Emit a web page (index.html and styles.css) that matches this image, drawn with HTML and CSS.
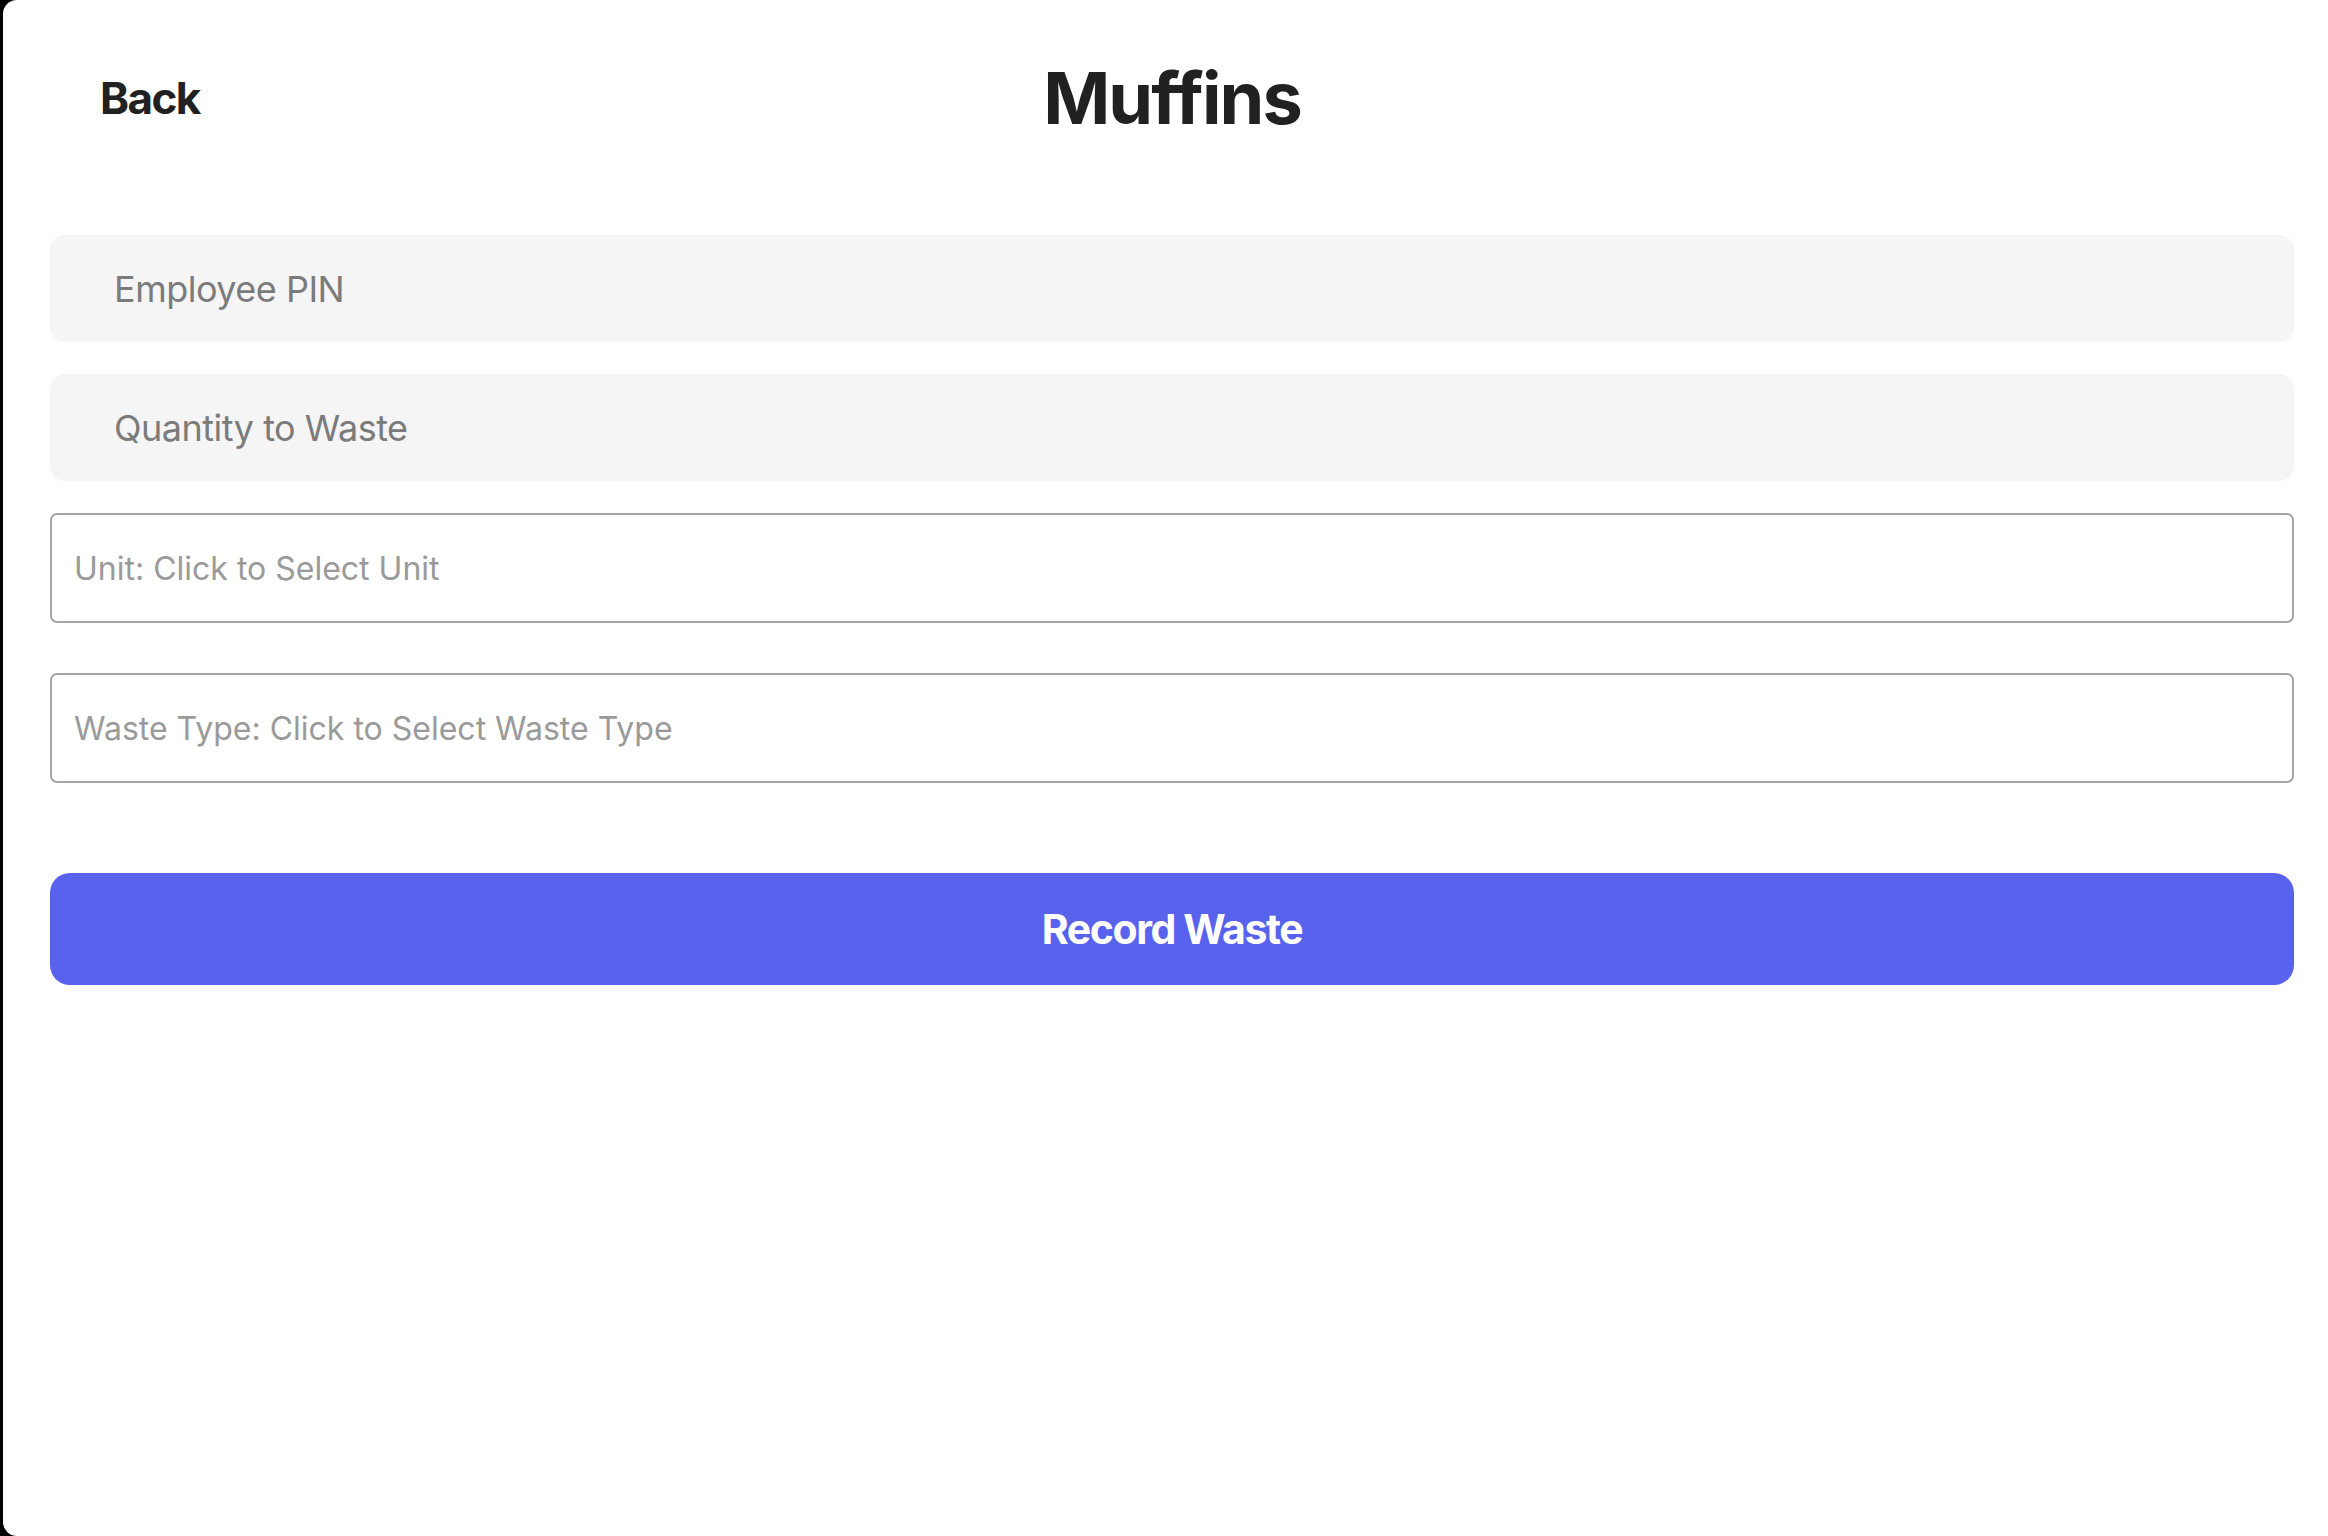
FILE: index.html
```html
<!DOCTYPE html>
<html lang="en">
<head>
    <meta charset="UTF-8">
    <meta name="viewport" content="width=device-width, initial-scale=1.0">
    <title>Record Waste - Muffins</title>
    <link rel="stylesheet" href="styles.css">
</head>
<body>
    <div class="screen">
        <div class="header">
            <a class="back" href="#">Back</a>
            <h1 class="title">Muffins</h1>
            <div></div>
        </div>

        <!-- Waste form -->
        <form class="waste-form" onsubmit="return false;">
            <input class="field field-pin" type="password" placeholder="Employee PIN">
            <input class="field field-qty" type="text" placeholder="Quantity to Waste">
            <div class="select select-unit">Unit: Click to Select Unit</div>
            <div class="select select-type">Waste Type: Click to Select Waste Type</div>
            <button class="record-button" type="submit">Record Waste</button>
        </form>
    </div>
</body>
</html>
```

FILE: styles.css
```css
body {
    margin: 0;
    background-color: #000;
    font-family: 'Inter', 'Liberation Sans', sans-serif;
    color: #212121;
}
.screen {
    margin-left: 3px;
    min-height: 100vh;
    box-sizing: border-box;
    background-color: #fff;
    border-radius: 14px 0 0 14px;
    padding: 55px 34px 0 47px;
}
.header {
    display: grid;
    grid-template-columns: 1fr auto 1fr;
    align-items: center;
    height: 86px;
}
.back {
    padding-left: 50px;
    font-size: 44px;
    font-weight: 700;
    color: #212121;
    text-decoration: none;
    letter-spacing: -1.6px;
}
.title {
    margin: 0;
    font-size: 72px;
    line-height: 86px;
    font-weight: 700;
    letter-spacing: -2px;
}
.waste-form {
    display: flex;
    flex-direction: column;
    margin-top: 94px;
}
.field {
    height: 107px;
    box-sizing: border-box;
    border: none;
    border-radius: 15px;
    background-color: #f5f5f5;
    padding: 0 64px;
    font-family: inherit;
    font-size: 36px;
    letter-spacing: -0.5px;
    color: #333;
    margin-bottom: 32px;
    outline: none;
}
.field::placeholder {
    color: #7b7b7b;
}
.select {
    height: 110px;
    box-sizing: border-box;
    border: 2px solid #a4a4a4;
    border-radius: 7px;
    padding: 0 22px;
    display: flex;
    align-items: center;
    font-size: 32px;
    color: #9a9a9a;
    cursor: pointer;
}
.select-unit {
    margin-bottom: 50px;
}
.select-type {
    margin-bottom: 90px;
}
.record-button {
    height: 112px;
    border: none;
    border-radius: 20px;
    background-color: #5862ec;
    color: #fff;
    font-family: inherit;
    font-size: 41px;
    font-weight: 700;
    letter-spacing: -1.4px;
    cursor: pointer;
}
```
